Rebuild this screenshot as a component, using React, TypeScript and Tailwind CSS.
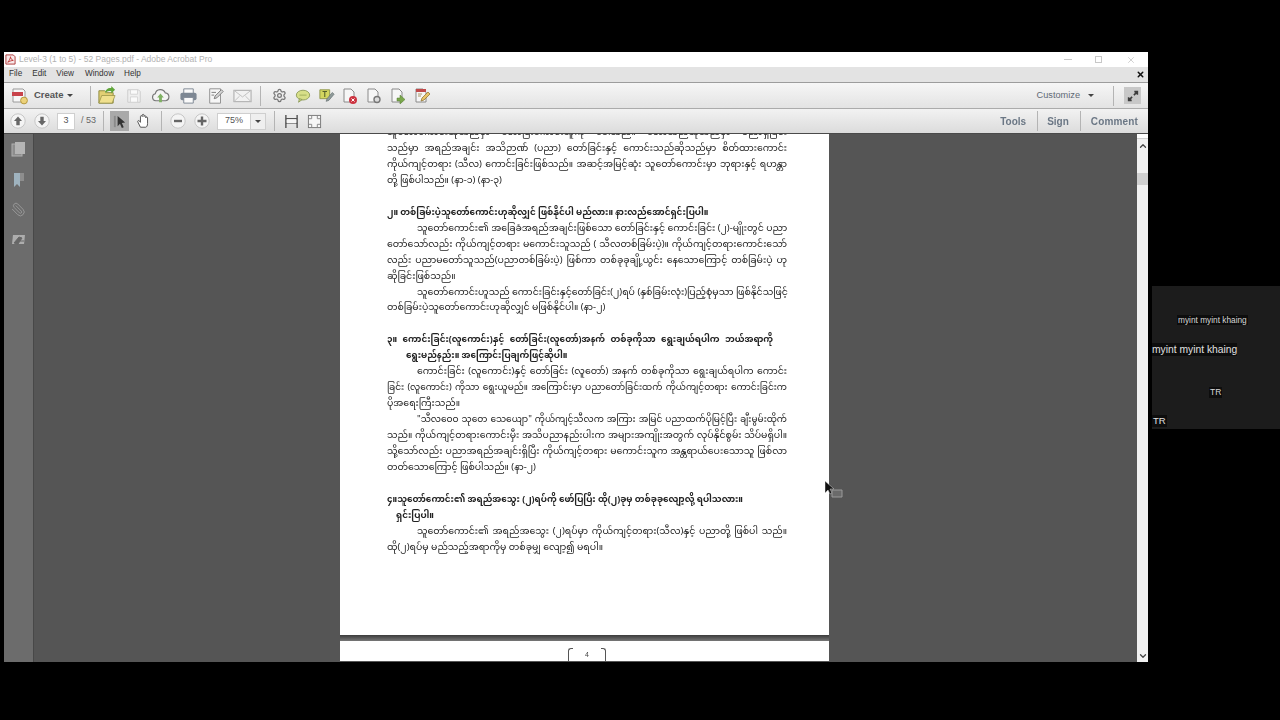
import { ChevronDown, ChevronUp, Paperclip, Settings, X } from "lucide-react";

const FULL = "w-[400px] text-justify [text-align-last:justify]";
const INDENT = "ml-[30px] w-[370px] text-justify [text-align-last:justify]";

const lines: { text: string; cls?: string }[] = [
  { text: "သူတော်ကောင်းဆိုသည်မှာ တော်ပြီးကောင်းသူကို ခေါ်သည်။ တော်သည်ဆိုသည်မှာ ပညာရှိခြင်း", cls: FULL },
  { text: "သည်မှာ အရည်အချင်း အသိဉာဏ် (ပညာ) တော်ခြင်းနှင့် ကောင်းသည်ဆိုသည်မှာ စိတ်ထားကောင်း", cls: FULL },
  { text: "ကိုယ်ကျင့်တရား (သီလ) ကောင်းခြင်းဖြစ်သည်။ အဆင့်အမြင့်ဆုံး သူတော်ကောင်းမှာ ဘုရားနှင့် ရဟန္တာ", cls: FULL },
  { text: "တို့ ဖြစ်ပါသည်။ (နာ-၁) (နာ-၃)" },
  { text: "" },
  { text: "၂။ တစ်ခြမ်းပဲ့သူတော်ကောင်းဟုဆိုလျှင် ဖြစ်နိုင်ပါ မည်လား။ နားလည်အောင်ရှင်းပြပါ။", cls: "text-[8.800px] font-bold w-[320px] [text-align-last:justify]" },
  { text: "သူတော်ကောင်း၏ အခြေခံအရည်အချင်းဖြစ်သော တော်ခြင်းနှင့် ကောင်းခြင်း (၂)-မျိုးတွင်  ပညာ", cls: INDENT },
  { text: "တော်သော်လည်း ကိုယ်ကျင့်တရား မကောင်းသူသည် ( သီလတစ်ခြမ်းပဲ့)။ ကိုယ်ကျင့်တရားကောင်းသော်", cls: FULL },
  { text: "လည်း ပညာမတော်သူသည်(ပညာတစ်ခြမ်းပဲ့) ဖြစ်ကာ တစ်ခုခုချို့ယွင်း နေသောကြောင့် တစ်ခြမ်းပဲ့ ဟု", cls: FULL },
  { text: "ဆိုခြင်းဖြစ်သည်။" },
  { text: "သူတော်ကောင်းဟူသည် ကောင်းခြင်းနှင့်တော်ခြင်း(၂)ရပ် (နှစ်ခြမ်းလုံး)ပြည့်စုံမှသာ ဖြစ်နိုင်သဖြင့်", cls: INDENT },
  { text: "တစ်ခြမ်းပဲ့သူတော်ကောင်းဟုဆိုလျှင် မဖြစ်နိုင်ပါ။ (နာ-၂)" },
  { text: "" },
  { text: "၃။ ကောင်းခြင်း(လူကောင်း)နှင့် တော်ခြင်း(လူတော်)အနက် တစ်ခုကိုသာ ရွေးချယ်ရပါက ဘယ်အရာကို", cls: "text-[8.800px] font-bold w-[386px] [text-align-last:justify]" },
  { text: "ရွေးမည်နည်း။ အကြောင်းပြချက်ဖြင့်ဆိုပါ။", cls: "text-[8.800px] font-bold ml-[19px]" },
  { text: "ကောင်းခြင်း (လူကောင်း)နှင့် တော်ခြင်း (လူတော်) အနက် တစ်ခုကိုသာ ရွေးချယ်ရပါက ကောင်း", cls: INDENT },
  { text: "ခြင်း (လူကောင်း) ကိုသာ ရွေးယူမည်။ အကြောင်းမှာ ပညာတော်ခြင်းထက် ကိုယ်ကျင့်တရား ကောင်းခြင်းက", cls: `text-[9px] ${FULL}` },
  { text: "ပိုအရေးကြီးသည်။" },
  { text: "\"သီလဝေဝ သုတေ သေယျော\" ကိုယ်ကျင့်သီလက အကြား အမြင် ပညာထက်ပိုမြင့်ပြီး ချီးမွမ်းထိုက်", cls: `text-[9px] ${INDENT}` },
  { text: "သည်။ ကိုယ်ကျင့်တရားကောင်းမှီး အသိပညာနည်းပါးက အများအကျိုးအတွက် လုပ်နိုင်စွမ်း သိပ်မရှိပါ။", cls: FULL },
  { text: "သို့သော်လည်း ပညာအရည်အချင်းရှိပြီး ကိုယ်ကျင့်တရား မကောင်းသူက အန္တရာယ်ပေးသောသူ ဖြစ်လာ", cls: FULL },
  { text: "တတ်သောကြောင့် ဖြစ်ပါသည်။ (နာ-၂)" },
  { text: "" },
  { text: "၄။သူတော်ကောင်း၏ အရည်အသွေး (၂)ရပ်ကို ဖော်ပြပြီး ထို(၂)ခုမှ တစ်ခုခုလျော့လို့ ရပါသလား။", cls: "text-[8.800px] font-bold w-[356px] [text-align-last:justify]" },
  { text: "ရှင်းပြပါ။", cls: "text-[8.800px] font-bold ml-[9px]" },
  { text: "သူတော်ကောင်း၏ အရည်အသွေး (၂)ရပ်မှာ ကိုယ်ကျင့်တရား(သီလ)နှင့် ပညာတို့ ဖြစ်ပါ သည်။", cls: INDENT },
  { text: "ထို(၂)ရပ်မှ မည်သည့်အရာကိုမှ တစ်ခုမျှ လျော့၍ မရပါ။" },
];

function Sep({ cls }: { cls: string }) {
  return <div className={`h-[20px] w-px shrink-0 bg-[#b4b4b4] ${cls}`} />;
}

function Caret({ cls }: { cls: string }) {
  return <div className={`h-0 w-0 shrink-0 border-x-[3px] border-t-[3px] border-x-transparent border-t-[#444] ${cls}`} />;
}

function CircleButton({ kind, cls }: { kind: "up" | "down" | "minus" | "plus"; cls: string }) {
  const paths = {
    up: "M8 3.5 12 8H9.7v4.2H6.3V8H4z",
    down: "M8 12.5 4 8h2.3V3.8h3.4V8H12z",
    minus: "M4 6.8h8v2.4H4z",
    plus: "M6.8 3.5h2.4v3.3h3.3v2.4H9.2v3.3H6.8V9.2H3.5V6.8h3.3z",
  };
  return (
    <svg viewBox="0 0 16 16" className={`h-[16px] w-[16px] shrink-0 ${cls}`}>
      <circle cx="8" cy="8" r="7.2" fill="#f4f4f4" stroke="#c6c6c6" />
      <path d={paths[kind]} fill="#666" />
    </svg>
  );
}

function PageIcon({ badge, cls }: { badge: "x" | "gear" | "arrow" | "pen"; cls: string }) {
  return (
    <svg viewBox="0 0 18 18" className={`h-[18px] w-[18px] shrink-0 ${cls}`}>
      <path d="M3 2h7l3 3v10H3z" fill="#f6f6f6" stroke="#8a8a8a" />
      {badge === "pen" && <path d="M3 2h10v3H3z" fill="#c04a4a" />}
      {badge === "x" && (
        <>
          <circle cx="12" cy="13" r="4" fill="#cc3340" />
          <path d="m10.5 11.5 3 3m0-3-3 3" stroke="#fff" strokeWidth="1" />
        </>
      )}
      {badge === "gear" && <circle cx="12" cy="12.5" r="3" fill="#dcdcdc" stroke="#777" strokeWidth="1.4" />}
      {badge === "arrow" && <path d="M8 11h3V8l5 4.5-5 4.500v-3H8z" fill="#7aa84c" stroke="#557a30" strokeWidth=".5" />}
      {badge === "pen" && <path d="m8 14 1-3 6-6 2 2-6 6zM5 7h4M5 9h3" fill="#e9c46a" stroke="#8a6d2a" strokeWidth=".7" />}
    </svg>
  );
}

function Toolbar() {
  return (
    <div className="flex h-[26px] shrink-0 items-center border-t border-[#9c9c9c] bg-gradient-to-b from-[#f6f6f6] to-[#e3e3e3]">
      <svg viewBox="0 0 18 18" className="ml-[7px] h-[18px] w-[18px] shrink-0">
        <path d="M2 2h10l2 2v11H2z" fill="#f7f7f7" stroke="#9a9a9a" />
        <path d="M1 5h11v4H1z" fill="#c8434b" />
        <circle cx="13" cy="13.5" r="3.4" fill="#ecd27a" stroke="#b69a40" />
      </svg>
      <span className="ml-[5px] w-[31px] shrink-0 text-[9.500px] font-bold text-[#555]">Create</span>
      <Caret cls="ml-[2px]" />
      <Sep cls="ml-[17px]" />
      <svg viewBox="0 0 20 20" className="ml-[6px] h-[19px] w-[19px] shrink-0">
        <path d="M2 5h6l2 2h7v11H2z" fill="#e2cf73" stroke="#8d8a3e" />
        <path d="M2 18 5 10h14l-3 8z" fill="#f0e08e" stroke="#8d8a3e" strokeWidth=".7" />
        <path d="M9 5c2-3 4-3 6-3V0l4 4-4 4V5.5C12 5 10.500 5.500 9 8z" fill="#60a63a" />
      </svg>
      <svg viewBox="0 0 18 18" className="ml-[10px] h-[16px] w-[16px] shrink-0">
        <path d="M2 2h12l2 2v12H2z" fill="#efefef" stroke="#c9c9c9" />
        <path d="M5 2h8v5H5zM5 10h8v6H5z" fill="#fafafa" stroke="#d2d2d2" />
      </svg>
      <svg viewBox="0 0 20 20" className="ml-[9px] h-[19px] w-[19px] shrink-0">
        <path d="M5 15.500a3.700 3.700 0 0 1-.5-7.300 5.500 5.500 0 0 1 10.500-1 4.200 4.200 0 0 1 .5 8.300z" fill="#f4f4f4" stroke="#777" strokeWidth="1.2" />
        <path d="M10 8 6.500 12H8.500v5h3v-5h2z" fill="#7fb163" />
      </svg>
      <svg viewBox="0 0 20 20" className="ml-[9px] h-[19px] w-[19px] shrink-0">
        <path d="M5 3h10v5H5z" fill="#fafafa" stroke="#7d8793" />
        <rect x="1.500" y="7" width="17" height="8" rx="2" fill="#7d8793" />
        <path d="M5 12h10v6H5z" fill="#fafafa" stroke="#7d8793" />
      </svg>
      <svg viewBox="0 0 20 20" className="ml-[9px] h-[18px] w-[18px] shrink-0">
        <path d="M3 2h12v16H3z" fill="#f6f6f6" stroke="#8a8a8a" />
        <path d="m8 13 1-3 7-7 2 2-7 7zM5 6h5M5 9h3" fill="#d5d5d5" stroke="#777" />
      </svg>
      <svg viewBox="0 0 20 16" className="ml-[8px] h-[16px] w-[19px] shrink-0">
        <rect x="1" y="2" width="18" height="12" fill="#f2f2f2" stroke="#a5a5a5" />
        <path d="m1 2 9 7 9-7M1 14l6-6M19 14l-6-6" fill="none" stroke="#c0c0c0" />
      </svg>
      <Sep cls="ml-[8px]" />
      <Settings size={15} strokeWidth={2} className="ml-[11px] shrink-0 text-[#777]" />
      <svg viewBox="0 0 18 18" className="ml-[8px] h-[16px] w-[16px] shrink-0">
        <ellipse cx="9" cy="8" rx="7.500" ry="5.500" fill="#d7df88" stroke="#8b9a58" />
        <path d="m5 12-1 4 4-3z" fill="#d7df88" stroke="#8b9a58" />
        <path d="M5 8h8" stroke="#9bab5a" />
      </svg>
      <svg viewBox="0 0 18 18" className="ml-[8px] h-[16px] w-[16px] shrink-0">
        <path d="M1 2h11v10H1z" fill="#d3d65f" stroke="#8c9447" />
        <path d="M4 4h5M6.500 4v6" stroke="#55602a" strokeWidth="1.200" />
        <path d="m8 15 1-3 6-7 2 2-6 7z" fill="#8f9b9b" stroke="#5f6b6b" strokeWidth=".7" />
      </svg>
      <PageIcon badge="x" cls="ml-[6px]" />
      <PageIcon badge="gear" cls="ml-[6px]" />
      <PageIcon badge="arrow" cls="ml-[6px]" />
      <PageIcon badge="pen" cls="ml-[6px]" />
      <span className="ml-auto text-[9.200px] text-[#5f6a75]">Customize</span>
      <Caret cls="ml-[8px]" />
      <Sep cls="ml-[19px]" />
      <div className="ml-[10px] mr-[7px] flex h-[17px] w-[17px] shrink-0 items-center justify-center bg-[#c8c8c8]">
        <svg viewBox="0 0 16 16" className="h-[14px] w-[14px]">
          <path d="M9 7 13 3M9.500 3H13v3.500" fill="none" stroke="#3c3c3c" strokeWidth="1.800" />
          <path d="M7 9 3 13M6.500 13H3V9.500" fill="none" stroke="#3c3c3c" strokeWidth="1.800" />
        </svg>
      </div>
    </div>
  );
}

function NavBar() {
  return (
    <div className="flex h-[26px] shrink-0 items-center border-y border-b-[#4a4a4a] border-t-[#ababab] bg-gradient-to-b from-[#f2f2f2] to-[#dcdcdc]">
      <CircleButton kind="up" cls="ml-[6px]" />
      <CircleButton kind="down" cls="ml-[8px]" />
      <div className="ml-[7px] flex h-[17px] w-[18px] shrink-0 items-center justify-center border border-[#cfcfcf] bg-white text-[9px] text-[#555]">3</div>
      <span className="ml-[6px] w-[19px] shrink-0 text-[9px] text-[#666]">/ 53</span>
      <Sep cls="ml-[3px]" />
      <div className="ml-[6px] flex h-[20px] w-[19px] shrink-0 items-center justify-center bg-[#a9a9a9]">
        <svg viewBox="0 0 16 16" className="h-[15px] w-[15px]">
          <path d="M2 2h2v12H2z" fill="#8a8a8a" />
          <path d="m6 2 8 7-3.500.5L12.500 14l-2 1-2-4.500L6 13z" fill="#333" />
        </svg>
      </div>
      <svg viewBox="0 0 18 18" className="ml-[7px] h-[16px] w-[16px] shrink-0">
        <path d="M5 16 2 10c-.6-1.500 1-2 2-1l1 1.500V4c0-1.400 2-1.400 2 0V2.500c0-1.400 2-1.400 2 0V4c0-1.400 2-1.400 2 0v1.500c0-1.400 2-1.400 2 0V12c0 2-1 4-2 4z" fill="#fff" stroke="#555" strokeWidth="1.100" />
      </svg>
      <Sep cls="ml-[9px]" />
      <CircleButton kind="minus" cls="ml-[8px]" />
      <CircleButton kind="plus" cls="ml-[8px]" />
      <div className="ml-[7px] flex h-[17px] w-[34px] shrink-0 items-center justify-center border border-[#cfcfcf] bg-white text-[9px] text-[#555]">75%</div>
      <div className="flex h-[17px] w-[15px] shrink-0 items-center justify-center border border-l-0 border-[#cfcfcf] bg-[#efefef]">
        <Caret cls="" />
      </div>
      <Sep cls="ml-[8px]" />
      <svg viewBox="0 0 16 16" className="ml-[9px] h-[15px] w-[15px] shrink-0">
        <path d="M2 1v14M14 1v14" stroke="#555" strokeWidth="1.500" />
        <path d="M2 5h12M2 10h12" stroke="#555" strokeWidth="1.500" />
        <path d="M3 5.500h10V10H3z" fill="#f5f5f5" />
      </svg>
      <svg viewBox="0 0 16 16" className="ml-[8px] h-[15px] w-[15px] shrink-0">
        <rect x="1.500" y="1.500" width="13" height="13" fill="#f6f6f6" stroke="#777" />
        <path d="M5 2v3H2M11 2v3h3M5 14v-3H2M11 14v-3h3" fill="none" stroke="#888" />
      </svg>
      <span className="ml-auto text-[10px] font-bold text-[#6b7785]">Tools</span>
      <Sep cls="ml-[11px]" />
      <span className="ml-[9px] text-[10px] font-bold text-[#6b7785]">Sign</span>
      <Sep cls="ml-[11px]" />
      <span className="ml-[10px] mr-[10px] text-[10px] font-bold tracking-[0.15px] text-[#6b7785]">Comment</span>
    </div>
  );
}

function SideRail() {
  return (
    <div className="flex w-[30px] shrink-0 flex-col items-center border-r border-[#484848] bg-[#6c6c6c] pt-[7px]">
      <svg viewBox="0 0 16 16" className="h-[16px] w-[16px] shrink-0">
        <rect x="1" y="3" width="10" height="12" fill="#8d8d8d" stroke="#b0b0b0" />
        <rect x="4" y="1" width="10" height="12" fill="#b5b5b5" />
      </svg>
      <svg viewBox="0 0 16 16" className="mt-[15px] h-[16px] w-[16px] shrink-0">
        <path d="M3 1h6v14L6 12 3 15z" fill="#9fb3bf" />
        <path d="M9 1h4v8h-4z" fill="#8d8d8d" />
      </svg>
      <Paperclip size={15} strokeWidth={1.500} className="mt-[14px] shrink-0 -scale-x-100 text-[#9a9a9a]" />
      <svg viewBox="0 0 16 16" className="mt-[15px] h-[16px] w-[16px] shrink-0">
        <path d="M2 3h12l-1 9H1z" fill="#adadad" />
        <path d="M3 11 8 5l3 1-4 6zM9 9h4" fill="#666" stroke="#666" />
      </svg>
    </div>
  );
}

function PdfPage() {
  return (
    <div className="h-[501px] w-[489px] shrink-0 overflow-hidden bg-white pl-[47px] font-['Noto_Sans_Myanmar','Noto_Sans',sans-serif] text-[9.400px] text-[#222]">
      <div className="-mt-[8px]">
        {lines.map((line, i) => (
          <div key={i} className={`h-[15.960px] whitespace-nowrap leading-[15.960px] ${line.cls ?? ""}`}>
            {line.text}
          </div>
        ))}
      </div>
    </div>
  );
}

function Scrollbar() {
  return (
    <div className="flex w-[11px] shrink-0 flex-col items-center bg-[#f1f1f1]">
      <div className="h-[5px] w-full border-b border-[#d0d0d0] bg-white" />
      <ChevronUp size={10} strokeWidth={3} className="mt-[2px] shrink-0 text-[#444]" />
      <div className="mt-[22px] h-[12px] w-full shrink-0 bg-[#d0d0d0]" />
      <ChevronDown size={10} strokeWidth={3} className="mt-auto mb-[1px] shrink-0 text-[#444]" />
    </div>
  );
}

function Gallery() {
  return (
    <div className="ml-[4px] mt-[286px] flex h-[143px] w-[128px] shrink-0 flex-col items-start bg-[#1c1c1c] font-['Liberation_Sans',sans-serif] text-white">
      <span className="ml-[25px] mt-[29px] bg-[#0d0d0d] px-[1px] text-[8.300px] leading-[10px] text-[#d8d8d8]">myint myint khaing</span>
      <span className="mt-[18px] bg-[#0d0d0d] text-[10.300px] leading-[13px] text-[#e0e0e0]">myint myint khaing</span>
      <span className="ml-[57px] mt-[31px] bg-[#0d0d0d] px-[1px] text-[8.500px] leading-[11px] text-[#d8d8d8]">TR</span>
      <span className="mt-[17px] bg-[#0d0d0d] px-[1px] text-[9.500px] leading-[12px] text-[#e0e0e0]">TR</span>
    </div>
  );
}

export default function App() {
  return (
    <div className="relative flex h-[720px] w-[1280px] overflow-hidden bg-black font-['Noto_Sans',sans-serif]">
      <div className="ml-[4px] mt-[52px] flex h-[610px] w-[1144px] shrink-0 flex-col font-['Liberation_Sans','Noto_Sans',sans-serif] blur-[0.4px]">
        <div className="flex h-[15px] shrink-0 items-center bg-white">
          <svg viewBox="0 0 12 12" className="ml-[1px] h-[11px] w-[11px] shrink-0">
            <path d="M1 1h8l2 2v8H1z" fill="#f8e9e9" stroke="#a33" />
            <path d="M3 9c2-2 3-5 3-6 0 2 1 3 3 4-2 0-4 1-6 2z" fill="none" stroke="#b33" />
          </svg>
          <span className="ml-[3px] text-[8.500px] text-[#b2b2b2]">Level-3 (1 to 5) - 52 Pages.pdf - Adobe Acrobat Pro</span>
          <div className="ml-auto h-px w-[8px] shrink-0 bg-[#c8c8c8]" />
          <div className="ml-[23px] h-[7px] w-[7px] shrink-0 border border-[#c8c8c8]" />
          <X size={10} className="ml-[24px] mr-[12px] shrink-0 text-[#c8c8c8]" />
        </div>
        <div className="flex h-[15px] shrink-0 items-center bg-[#e3e3e3] text-[8.200px] text-[#333]">
          <span className="ml-[5px]">File</span>
          <span className="ml-[10px]">Edit</span>
          <span className="ml-[10px]">View</span>
          <span className="ml-[11px]">Window</span>
          <span className="ml-[10px]">Help</span>
          <X size={9} strokeWidth={4} className="ml-auto mr-[3px] shrink-0 text-[#111]" />
        </div>
        <Toolbar />
        <NavBar />
        <div className="flex min-h-0 flex-1">
          <SideRail />
          <div className="flex min-w-0 flex-1 flex-col items-center overflow-hidden bg-[#555] pr-[2px]">
            <PdfPage />
            <div className="h-[6px] w-[489px] shrink-0 bg-gradient-to-b from-[#3c3c3c] to-[#777]" />
            <div className="flex h-[20px] w-[489px] shrink-0 items-start justify-center overflow-hidden bg-white pl-[5px] pt-[7px]">
              <div className="h-[16px] w-[5px] rounded-tl-[3px] border-l border-t border-[#555]" />
              <span className="mx-[12px] mt-[3px] text-[7px] leading-[8px] text-[#444]">4</span>
              <div className="h-[16px] w-[5px] rounded-tr-[3px] border-r border-t border-[#555]" />
            </div>
          </div>
          <Scrollbar />
        </div>
      </div>
      <Gallery />
      {/* drag cursor over the page edge */}
      <svg viewBox="0 0 18 17" className="absolute left-[825px] top-[481px] h-[17px] w-[18px]">
        <path d="M0 0v12l3-3 2 4 2-1-2-4h4z" fill="#111" stroke="#ddd" strokeWidth=".5" />
        <path d="M7 9h10v7H7z" fill="#6a6a6a" stroke="#9a9a9a" />
      </svg>
    </div>
  );
}
